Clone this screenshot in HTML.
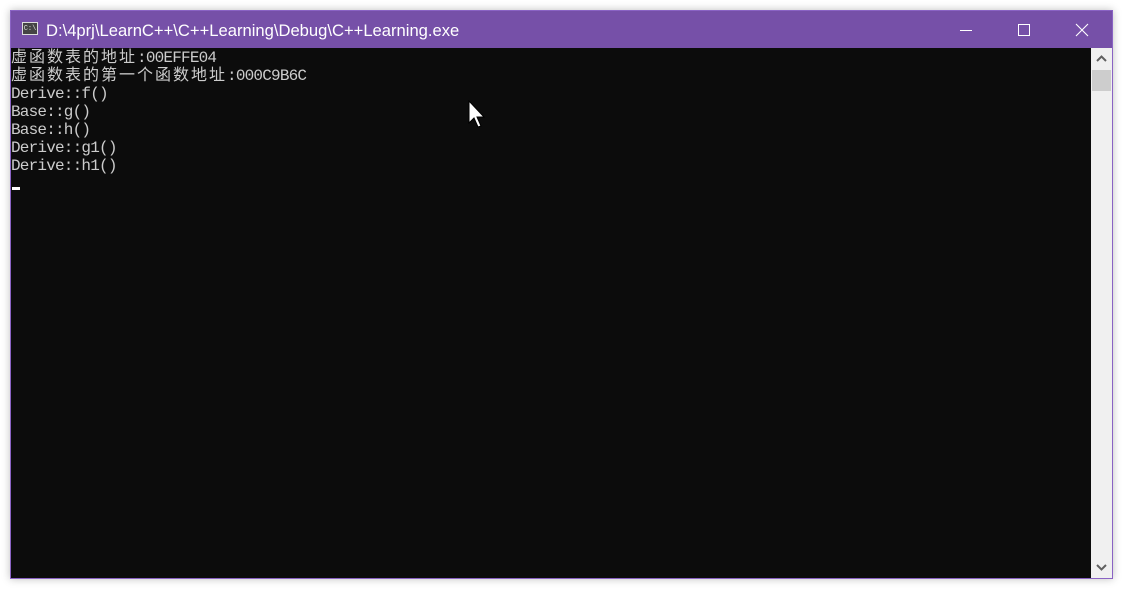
<!DOCTYPE html>
<html><head><meta charset="utf-8"><style>
html,body{margin:0;padding:0;width:1123px;height:589px;background:#fff;overflow:hidden;position:relative}
.win{position:absolute;left:10px;top:10px;width:1101px;height:567px;border:1px solid #8a63c4;background:#0c0c0c;box-shadow:0 0 8px rgba(0,0,0,.25)}
.title{position:absolute;left:0;top:0;width:1101px;height:37px;background:#7650a8;color:#fff;font:16.6px "Liberation Sans",sans-serif}
.title .t{position:absolute;left:35px;top:10px;white-space:nowrap}
.ico{position:absolute;left:11px;top:11px;width:16px;height:13px;border:1px solid #ddd;background:#444;font:7px "Liberation Mono",monospace;color:#ddd;line-height:13px;text-align:center;box-sizing:border-box}
.sb{position:absolute;left:1080px;top:37px;width:21px;height:530px;background:#f0f0f0}
.thumb{position:absolute;left:1px;top:22px;width:19px;height:21px;background:#cdcdcd}
.txt{position:absolute;left:0px;top:38px;color:#cccccc;font:16px "Liberation Mono",monospace;letter-spacing:-0.8px;white-space:pre}
.txt div{height:18px;line-height:18px;overflow:visible}
.c{font-family:"Noto Sans CJK SC","WenQuanYi Zen Hei",sans-serif;font-size:16px;letter-spacing:2px;line-height:18px;display:inline-block;height:18px;vertical-align:top;position:relative;top:-3px}
.cur{position:absolute;left:1px;top:176px;width:8px;height:3px;background:#fff}
</style></head><body>
<div class="win">
 <div class="title"><div class="ico">C:\</div><div class="t">D:\4prj\LearnC++\C++Learning\Debug\C++Learning.exe</div>
  <svg style="position:absolute;left:948px;top:12px" width="14" height="14"><line x1="1" y1="7.5" x2="13" y2="7.5" stroke="#fff" stroke-width="1"/></svg>
  <svg style="position:absolute;left:1006px;top:12px" width="14" height="14"><rect x="1.5" y="1.5" width="11" height="11" fill="none" stroke="#fff"/></svg>
  <svg style="position:absolute;left:1064px;top:12px" width="14" height="14"><path d="M1 1L13 13M13 1L1 13" stroke="#fff" stroke-width="1.1"/></svg>
 </div>
 <div class="txt"><div><span class="c">虚函数表的地址</span>:00EFFE04</div><div><span class="c">虚函数表的第一个函数地址</span>:000C9B6C</div><div>Derive::f()</div><div>Base::g()</div><div>Base::h()</div><div>Derive::g1()</div><div>Derive::h1()</div></div>
 <div class="cur"></div>
 <svg style="position:absolute;left:457px;top:89px" width="22" height="32"><path d="M1 1L1 23L6 18L10 27L13 26L9 17L16 17Z" fill="#fff" stroke="#000" stroke-width="1"/></svg>
 <div class="sb"><div class="thumb"></div>
  <svg style="position:absolute;left:5px;top:7px" width="11" height="8"><path d="M1 6L5.5 1.5L10 6" fill="none" stroke="#606060" stroke-width="2"/></svg>
  <svg style="position:absolute;left:5px;top:515px" width="11" height="8"><path d="M1 2L5.5 6.5L10 2" fill="none" stroke="#606060" stroke-width="2"/></svg>
 </div>
</div>
</body></html>
